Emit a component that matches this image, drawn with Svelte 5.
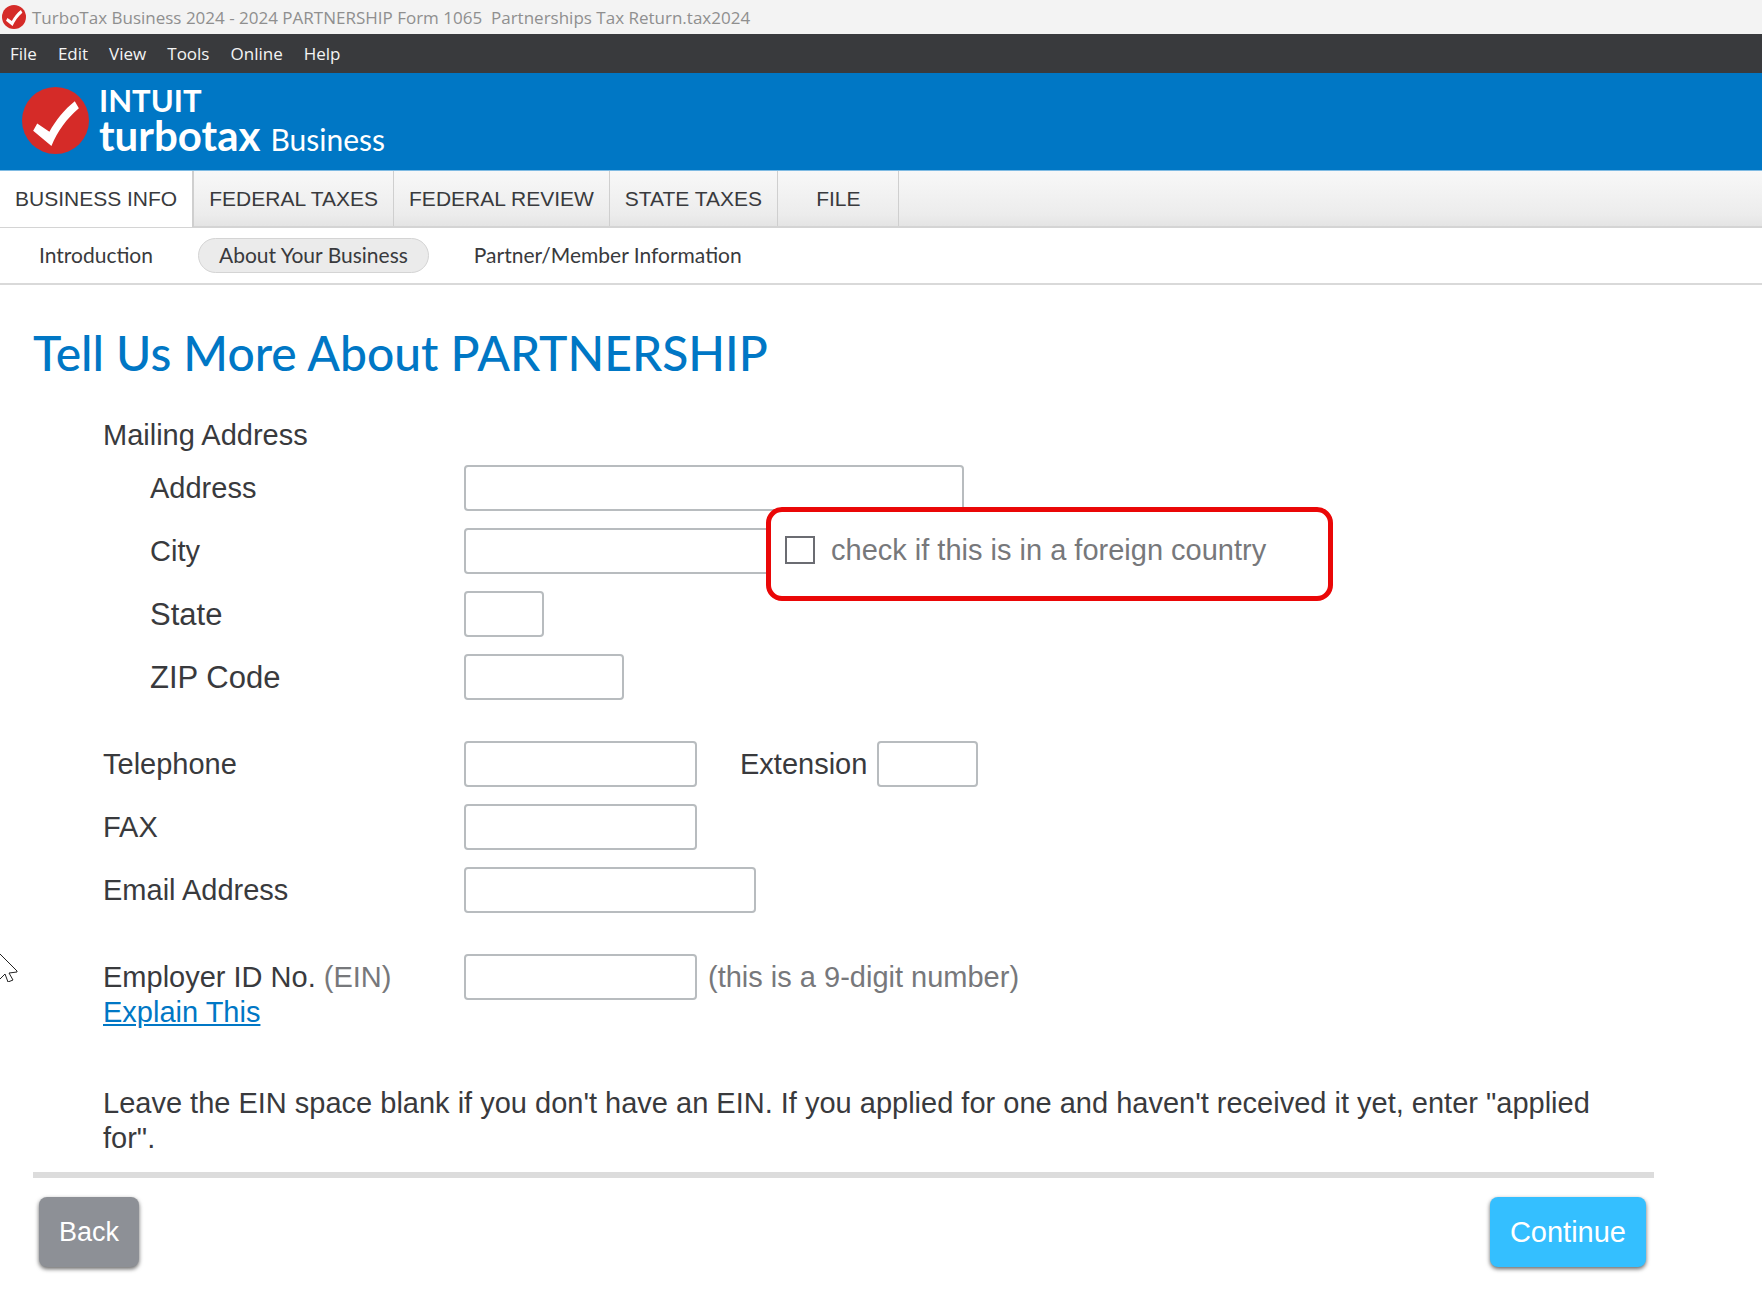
<script lang="ts">
	type Field = {
		id: string;
		label: string;
		width: number;
		type?: string;
		large?: boolean;
	};

	const menus = ['File', 'Edit', 'View', 'Tools', 'Online', 'Help'];
	const tabs = ['BUSINESS INFO', 'FEDERAL TAXES', 'FEDERAL REVIEW', 'STATE TAXES', 'FILE'];
	const steps = ['Introduction', 'About Your Business', 'Partner/Member Information'];

	const addressFields: Field[] = [
		{ id: 'address', label: 'Address', width: 500 },
		{ id: 'city', label: 'City', width: 360 },
		{ id: 'state', label: 'State', width: 80, large: true },
		{ id: 'zip', label: 'ZIP Code', width: 160, large: true }
	];

	const contactFields: Field[] = [
		{ id: 'telephone', label: 'Telephone', width: 233, type: 'tel' },
		{ id: 'fax', label: 'FAX', width: 233, type: 'tel' },
		{ id: 'email', label: 'Email Address', width: 292, type: 'email' }
	];

	let activeTab = $state('BUSINESS INFO');
	let activeStep = $state('About Your Business');
	let foreign = $state(false);
	let values: Record<string, string> = $state({
		address: '',
		city: '',
		state: '',
		zip: '',
		telephone: '',
		extension: '',
		fax: '',
		email: '',
		ein: ''
	});
</script>

{#snippet check(className: string)}
	<svg class={className} viewBox="0 0 66 66" aria-hidden="true">
		<circle cx="33" cy="33" r="33" fill="#d52b28" />
		<path d="M15 36 L11 43 L29 58 C35 44 44 31 56 21 L52 14 C42 22 33 33 27 44 Z" fill="#fff" />
	</svg>
{/snippet}

<div class="app">
	<div class="title-bar">
		{@render check('app-icon')}
		<span class="window-title">TurboTax Business 2024 - 2024 PARTNERSHIP Form 1065&nbsp; Partnerships Tax Return.tax2024</span>
	</div>

	<div class="menu-bar">
		{#each menus as menu}
			<button class="menu-item" type="button">{menu}</button>
		{/each}
	</div>

	<header class="brand">
		{@render check('brand-icon')}
		<div class="brand-text">
			<span class="brand-company">INTUIT</span>
			<span class="brand-row">
				<span class="brand-product">turbotax</span>
				<span class="brand-edition">Business</span>
			</span>
		</div>
	</header>

	<nav class="tabs" aria-label="Sections">
		{#each tabs as tab}
			<button
				class="tab"
				class:active={activeTab === tab}
				class:wide={tab === 'FILE'}
				type="button"
				onclick={() => (activeTab = tab)}>{tab}</button
			>
		{/each}
	</nav>

	<nav class="steps" aria-label="Steps">
		{#each steps as step}
			<button
				class="step"
				class:active={activeStep === step}
				type="button"
				onclick={() => (activeStep = step)}>{step}</button
			>
		{/each}
	</nav>

	<main class="content">
		<h1>Tell Us More About PARTNERSHIP</h1>

		<form class="form" onsubmit={(e) => e.preventDefault()}>
			<div class="group-title">Mailing Address</div>
			<div class="group">
				{#each addressFields as field}
					<div class="row">
						<label class="label indented" class:large={field.large} for={field.id}>{field.label}</label>
						<input id={field.id} class="field" type="text" style="width: {field.width}px" bind:value={values[field.id]} />
						{#if field.id === 'city'}
							<div class="foreign-box">
								<input id="foreign" class="foreign-check" type="checkbox" bind:checked={foreign} />
								<label for="foreign">check if this is in a foreign country</label>
							</div>
						{/if}
					</div>
				{/each}
			</div>

			<div class="group">
				{#each contactFields as field}
					<div class="row">
						<label class="label" for={field.id}>{field.label}</label>
						<input id={field.id} class="field" type={field.type} style="width: {field.width}px" bind:value={values[field.id]} />
						{#if field.id === 'telephone'}
							<label class="extension-label" for="extension">Extension</label>
							<input id="extension" class="field extension" type="text" bind:value={values.extension} />
						{/if}
					</div>
				{/each}
			</div>

			<div class="group ein">
				<div class="row">
					<label class="label" for="ein">Employer ID No. <span class="muted">(EIN)</span></label>
					<input id="ein" class="field ein-field" type="text" bind:value={values.ein} />
					<span class="hint">(this is a 9-digit number)</span>
				</div>
				<a class="explain" href="#explain">Explain This</a>
			</div>

			<p class="note">
				Leave the EIN space blank if you don't have an EIN. If you applied for one and haven't received it yet, enter "applied for".
			</p>
		</form>

		<div class="actions">
			<button class="action back" type="button">Back</button>
			<button class="action continue" type="button">Continue</button>
		</div>
	</main>

	<svg class="cursor" viewBox="0 0 18 28" aria-hidden="true">
		<path d="M-8 -8 L17 17 L17 18 L9 19 L13 26 L8 28 L5 20 L-2 27" fill="#fff" stroke="#222" stroke-width="1" />
	</svg>
</div>

<style>
	:global(body) {
		margin: 0;
		background: #fff;
	}

	.app {
		position: relative;
		min-height: 100vh;
		background: #fff;
		color: #393a3d;
		font-family: 'Liberation Sans', Arial, sans-serif;
		font-size: 29px;
		line-height: 35px;
	}

	button {
		border: none;
		background: none;
		padding: 0;
		color: inherit;
		font: inherit;
		white-space: nowrap;
		cursor: pointer;
	}

	.title-bar {
		display: flex;
		align-items: center;
		gap: 6px;
		height: 34px;
		padding-left: 2px;
		background: #f3f3f3;
		color: #8f8f8f;
		font-family: 'Open Sans', 'Noto Sans', sans-serif;
		font-size: 17px;
		white-space: nowrap;
	}

	.app-icon {
		width: 24px;
		height: 24px;
	}

	.menu-bar {
		display: flex;
		align-items: center;
		gap: 21px;
		height: 39px;
		padding-left: 10px;
		background: #393a3d;
		color: #f4f4f4;
		font-family: 'Open Sans', 'Noto Sans', sans-serif;
		font-size: 17px;
	}

	.brand {
		display: flex;
		align-items: center;
		gap: 10px;
		height: 98px;
		padding: 0 22px 2px;
		border-bottom: 1px solid #7fbbe3;
		background: #0077c5;
		color: #fff;
		box-sizing: border-box;
		font-family: Lato, sans-serif;
	}

	.brand-icon {
		width: 67px;
		height: 67px;
	}

	.brand-text {
		display: flex;
		flex-direction: column;
	}

	.brand-company {
		font-size: 31px;
		font-weight: 700;
		line-height: 32px;
	}

	.brand-row {
		display: flex;
		align-items: baseline;
		gap: 10px;
		line-height: 38px;
	}

	.brand-product {
		font-size: 42px;
		font-weight: 700;
	}

	.brand-edition {
		font-size: 30px;
	}

	.tabs {
		display: flex;
		height: 57px;
		box-sizing: border-box;
		border-bottom: 2px solid #d4d4d4;
		background: linear-gradient(#f8f8f8, #ececec 80%, #e4e4e4);
	}

	.tab {
		padding: 0 15px;
		border-right: 1px solid #cfcfcf;
		font-size: 21px;
	}

	.tab.wide {
		padding: 0 38px;
	}

	.tab.active {
		margin-bottom: -1px;
		padding-bottom: 1px;
		border-right-width: 2px;
		background: #fff;
	}

	.steps {
		display: flex;
		align-items: center;
		gap: 24px;
		height: 57px;
		box-sizing: border-box;
		padding-left: 18px;
		border-bottom: 2px solid #d9d9d9;
		font-family: Lato, sans-serif;
		font-size: 21px;
	}

	.step {
		height: 35px;
		padding: 0 20px 2px;
		border: 1px solid transparent;
		border-radius: 18px;
		line-height: 31px;
	}

	.step.active {
		border-color: #d4d4d4;
		background: #ebebeb;
	}

	.content {
		padding: 40px 108px 36px 33px;
	}

	h1 {
		margin: 0;
		color: #0077c5;
		font-family: Lato, sans-serif;
		font-size: 48px;
		font-weight: 500;
		line-height: 56px;
	}

	.form {
		padding: 37px 30px 16px 70px;
	}

	.group-title {
		margin-bottom: 12px;
	}

	.group {
		display: flex;
		flex-direction: column;
		gap: 17px;
		margin-bottom: 41px;
	}

	.row {
		position: relative;
		display: flex;
		align-items: center;
	}

	.label {
		flex: none;
		width: 361px;
		box-sizing: border-box;
	}

	.label.indented {
		padding-left: 47px;
	}

	.label.large {
		font-size: 31px;
	}

	.field {
		height: 46px;
		box-sizing: border-box;
		padding: 0 10px;
		border: 2px solid #b8bcbf;
		border-radius: 4px;
		background: #fff;
		color: inherit;
		font: inherit;
	}

	/* sits over the end of the address and city fields */
	.foreign-box {
		position: absolute;
		top: -21px;
		left: 663px;
		z-index: 1;
		display: flex;
		align-items: center;
		gap: 16px;
		width: 567px;
		height: 94px;
		box-sizing: border-box;
		padding: 0 14px 8px;
		border: 5px solid #ea0707;
		border-radius: 16px;
		background: #fff;
		color: #77787b;
		white-space: nowrap;
	}

	.foreign-check {
		appearance: none;
		width: 30px;
		height: 28px;
		margin: 0;
		border: 2px solid #6b6c72;
		background: #fff;
	}

	.foreign-check:checked {
		background: #0077c5;
	}

	.extension-label {
		margin: 0 10px 0 43px;
	}

	.extension {
		width: 101px;
	}

	.ein {
		gap: 0;
		margin-bottom: 56px;
	}

	.ein-field {
		width: 233px;
	}

	.muted,
	.hint {
		color: #77787b;
	}

	.hint {
		margin-left: 11px;
	}

	.explain {
		align-self: flex-start;
		margin-top: -5px;
		color: #0077c5;
	}

	.note {
		margin: 0;
	}

	.actions {
		display: flex;
		justify-content: space-between;
		padding: 19px 8px 0 6px;
		border-top: 6px solid #dcdcdc;
	}

	.action {
		height: 70px;
		padding: 0 20px;
		border-radius: 8px;
		box-shadow: 0 2px 4px rgba(0, 0, 0, 0.6);
		color: #fff;
	}

	.back {
		background: #8d9096;
		font-size: 27px;
	}

	.continue {
		background: #34bfff;
	}

	.cursor {
		position: absolute;
		top: 954px;
		left: 0;
		width: 18px;
		height: 28px;
	}
</style>
